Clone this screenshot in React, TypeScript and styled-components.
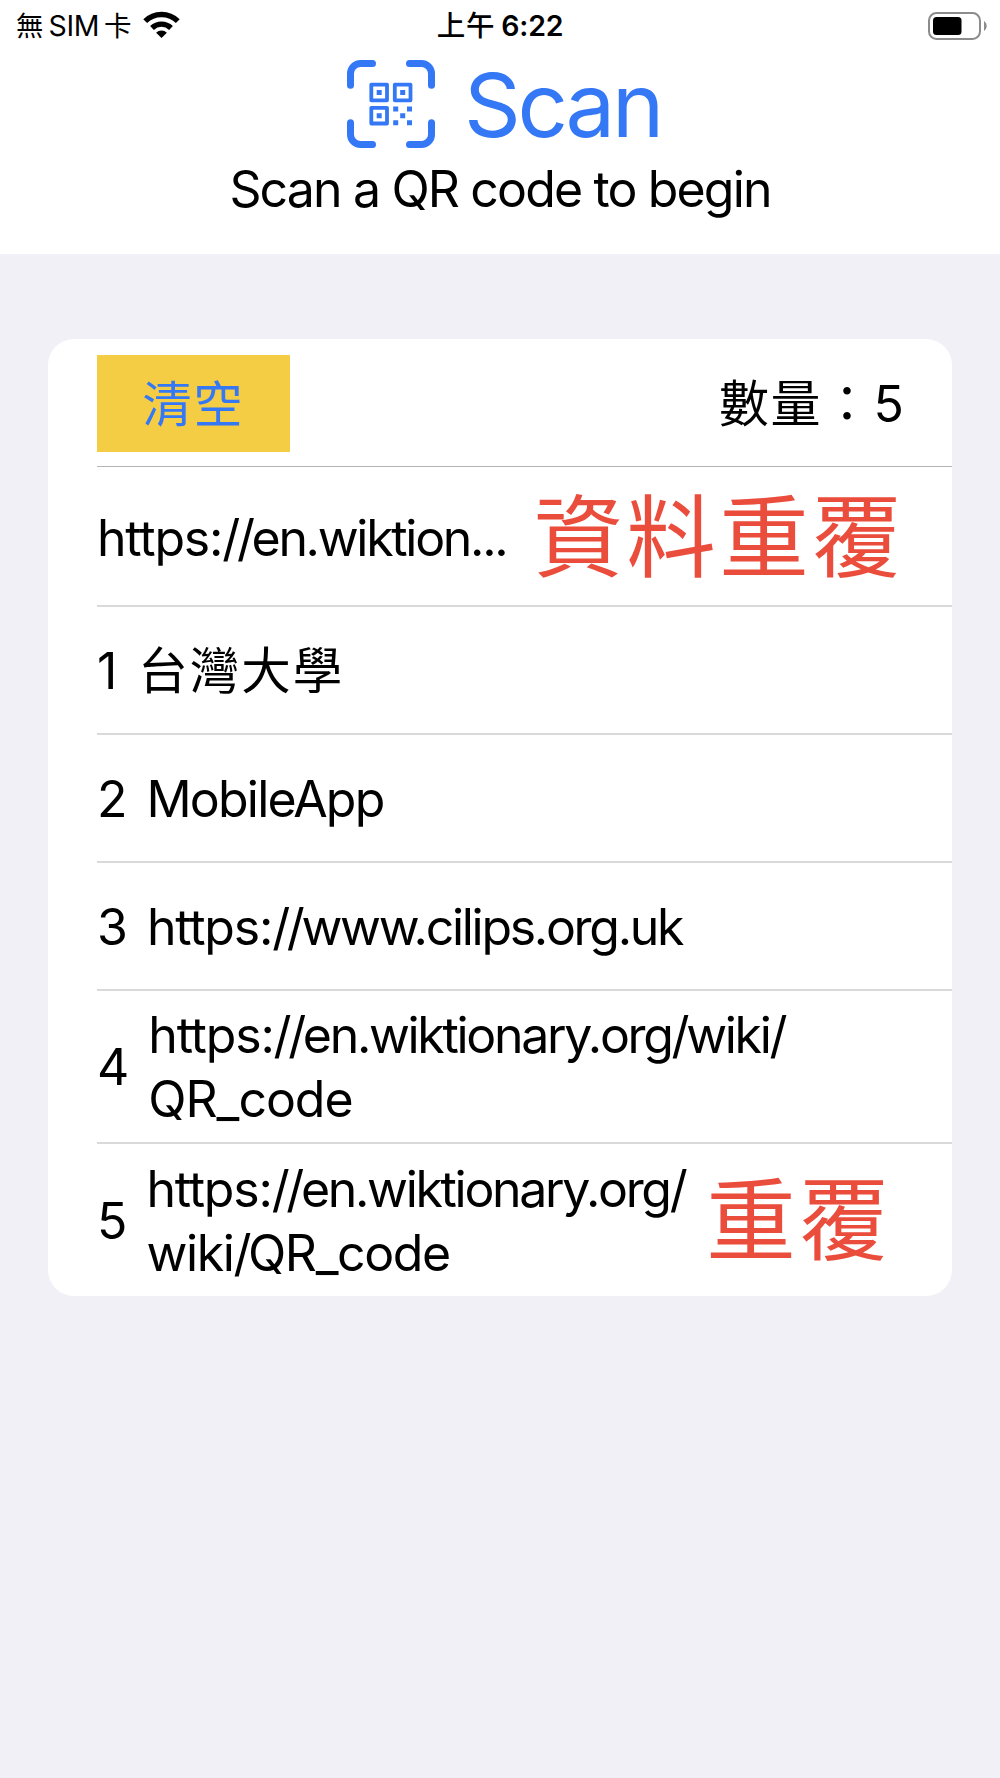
import React from "react";
import styled, { createGlobalStyle } from "styled-components";

const GlobalStyle = createGlobalStyle`
  * { box-sizing: border-box; }
  body {
    margin: 0;
    background: #f0f0f6;
    font-family: Inter, "Noto Sans CJK TC", sans-serif;
    color: #000;
  }
`;

const Screen = styled.main`
  width: 1000px;
  height: 1778px;
  background: #f0f0f6;
  overflow: hidden;
`;

const Header = styled.header`
  height: 254px;
  background: #fff;
`;

const StatusBar = styled.div`
  display: grid;
  grid-template-columns: 1fr auto 1fr;
  align-items: center;
  height: 50px;
  padding: 0 13px 0 16px;
`;

const Carrier = styled.div`
  display: flex;
  align-items: center;
  gap: 5px;
  font-size: 27.5px;
  line-height: 50px;
`;

const Sim = styled.span`
  font-size: 28.5px;
  letter-spacing: -0.4px;
`;

const WifiIcon = styled.svg`
  width: 37px;
  height: 28px;
  margin-left: 7px;
  margin-bottom: 2px;
`;

const Clock = styled.div`
  display: flex;
  gap: 6px;
  padding-top: 1px;
  margin-right: 3px;
  font-size: 28.5px;
  line-height: 50px;
  font-weight: 600;
  letter-spacing: -0.2px;
`;

const Meridiem = styled.span`
  font-weight: 500;
  letter-spacing: 0.8px;
`;

const BatteryIcon = styled.svg`
  justify-self: end;
  width: 59px;
  height: 28px;
`;

const ScanButton = styled.button`
  display: flex;
  align-items: center;
  gap: 29px;
  height: 98px;
  margin: 5px 0 0 347px;
  padding: 0;
  border: 0;
  background: none;
  color: #3478f6;
  font-family: inherit;
`;

const ScanTitle = styled.span`
  padding-top: 2px;
  font-size: 88.5px;
  line-height: 98px;
  letter-spacing: -3.3px;
`;

const ScanIcon = styled.svg`
  width: 88px;
  height: 88px;
`;

const Hint = styled.p`
  margin: 4px 0 0;
  text-align: center;
  font-size: 50px;
  line-height: 64px;
  letter-spacing: -1.85px;
`;

const Card = styled.section`
  width: 904px;
  height: 957px;
  margin: 85px 0 0 48px;
  padding-left: 49px;
  border-radius: 26px;
  background: #fff;
`;

const Row = styled.div<{ $height: number; $gap?: number; $line?: string; $top?: number }>`
  display: flex;
  align-items: center;
  gap: ${(p) => p.$gap ?? 19}px;
  height: ${(p) => p.$height}px;
  padding: ${(p) => p.$top ?? 2}px 48px 0 0;
  border-bottom: ${(p) => p.$line ?? "2px solid #d9d9d9"};
  font-size: 50px;
  line-height: 64px;
`;

const ClearButton = styled.button`
  width: 193px;
  height: 97px;
  margin: 0 auto 0 0;
  padding: 0 0 6px;
  border: 0;
  background: #f4cd45;
  color: #3478f6;
  font-family: "Noto Sans CJK TC", sans-serif;
  font-size: 49px;
  letter-spacing: 2px;
`;

const Count = styled.span`
  margin-right: -1.5px;
  letter-spacing: 1.5px;
`;

const Label = styled.span<{ $cjk?: boolean }>`
  padding-left: ${(p) => (p.$cjk ? 2 : 0)}px;
  font-size: ${(p) => (p.$cjk ? 49.5 : 50)}px;
  white-space: nowrap;
`;

const Line = styled.span<{ $tracking: number }>`
  display: block;
  letter-spacing: ${(p) => p.$tracking}px;
`;

const Scheme = styled.span`
  letter-spacing: -1.2px;
`;

const Slash = styled.span`
  letter-spacing: -3.4px;
`;

const Warning = styled.strong<{ $inset?: number }>`
  margin-left: ${(p) => p.$inset ?? 0}px;
  font-weight: 400;
  font-size: 89.5px;
  line-height: 100px;
  letter-spacing: 3.4px;
  color: #eb4d3d;
  white-space: nowrap;
`;

type TextLine = { text: string; tracking: number };
type Entry = { lines: TextLine[]; cjk?: boolean; height: number; warning?: string };

const entries: Entry[] = [
  { lines: [{ text: "台灣大學", tracking: 2 }], cjk: true, height: 128 },
  { lines: [{ text: "MobileApp", tracking: -1.8 }], height: 128 },
  { lines: [{ text: "https://www.cilips.org.uk", tracking: -2.3 }], height: 128 },
  {
    lines: [
      { text: "https://en.wiktionary.org/wiki/", tracking: -2.32 },
      { text: "QR_code", tracking: -1.05 },
    ],
    height: 153,
  },
  {
    lines: [
      { text: "https://en.wiktionary.org/", tracking: -2.32 },
      { text: "wiki/QR_code", tracking: -1.4 },
    ],
    height: 152,
    warning: "重覆",
  },
];

function TrackedLine({ text, tracking }: TextLine) {
  return (
    <Line $tracking={tracking}>
      {text.split(/(https:|\/+)/).map((part, i) => {
        if (part === "https:") return <Scheme key={i}>{part}</Scheme>;
        if (part.startsWith("/")) return <Slash key={i}>{part}</Slash>;
        return part;
      })}
    </Line>
  );
}

function Wifi() {
  return (
    <WifiIcon viewBox="0 0 37 28" fill="none" stroke="#000" strokeWidth="5.4">
      <path d="M2.2 10.2a23 23 0 0 1 32.6 0" />
      <path d="M9 17a13.6 13.6 0 0 1 19 0" />
      <path d="M18.5 27l-5.4-5.3a7.7 7.7 0 0 1 10.8 0z" fill="#000" stroke="none" />
    </WifiIcon>
  );
}

function Battery() {
  return (
    <BatteryIcon viewBox="0 0 59 28">
      <rect x="1" y="1" width="51" height="26" rx="7.5" fill="none" stroke="#8c8c8c" strokeWidth="2" />
      <rect x="5" y="5" width="28.5" height="18" rx="3.5" />
      <path d="M56 9a6 6 0 0 1 0 10z" fill="#8c8c8c" />
    </BatteryIcon>
  );
}

function Qr() {
  return (
    <ScanIcon viewBox="0 0 88 88" fill="#3478f6">
      <path
        d="M3.5 25.3V13.5a10 10 0 0 1 10-10h12M62.5 3.5h12a10 10 0 0 1 10 10v11.8M84.5 62.7v11.8a10 10 0 0 1-10 10h-12M25.5 84.5h-12a10 10 0 0 1-10-10V62.7"
        fill="none"
        stroke="#3478f6"
        strokeWidth="7"
        strokeLinecap="round"
      />
      <path
        d="M24.3 24.6h15.7v15.7h-15.7zM47.8 24.6h15.7v15.7h-15.7zM24.3 47.8h15.7v15.7h-15.7z"
        fill="none"
        stroke="#3478f6"
        strokeWidth="3.8"
        strokeLinejoin="round"
      />
      <path d="M29.7 30h5v5h-5zM53.2 30h5v5h-5zM29.7 53.2h5v5h-5zM46.2 46.6h5v5h-5zM60 46.6h5v5h-5zM53.2 53.2h5v5h-5zM46.2 60.3h5v5h-5zM60 60.3h5v5h-5z" />
    </ScanIcon>
  );
}

export default function App() {
  return (
    <Screen>
      <GlobalStyle />
      <Header>
        <StatusBar>
          <Carrier>
            <span>無</span>
            <Sim>SIM</Sim>
            <span>卡</span>
            <Wifi />
          </Carrier>
          <Clock>
            <Meridiem>上午</Meridiem>
            <span>6:22</span>
          </Clock>
          <Battery />
        </StatusBar>
        <ScanButton>
          <Qr />
          <ScanTitle>Scan</ScanTitle>
        </ScanButton>
        <Hint>Scan a QR code to begin</Hint>
      </Header>
      <Card>
        <Row $height={128} $line="1px solid #b5b5b5">
          <ClearButton>清空</ClearButton>
          <Count>數量：5</Count>
        </Row>
        <Row $height={140} $gap={27} $top={4}>
          <Label>
            <TrackedLine text="https://en.wiktion..." tracking={-2.3} />
          </Label>
          <Warning>資料重覆</Warning>
        </Row>
        {entries.map((entry, i) => (
          <Row
            key={i}
            $height={entry.height}
            $top={entry.lines.length > 1 ? 1 : 2}
            $line={i === entries.length - 1 ? "0" : undefined}
          >
            <span>{i + 1}</span>
            <Label $cjk={entry.cjk}>
              {entry.lines.map((line) => (
                <TrackedLine key={line.text} {...line} />
              ))}
            </Label>
            {entry.warning && <Warning $inset={3}>{entry.warning}</Warning>}
          </Row>
        ))}
      </Card>
    </Screen>
  );
}
